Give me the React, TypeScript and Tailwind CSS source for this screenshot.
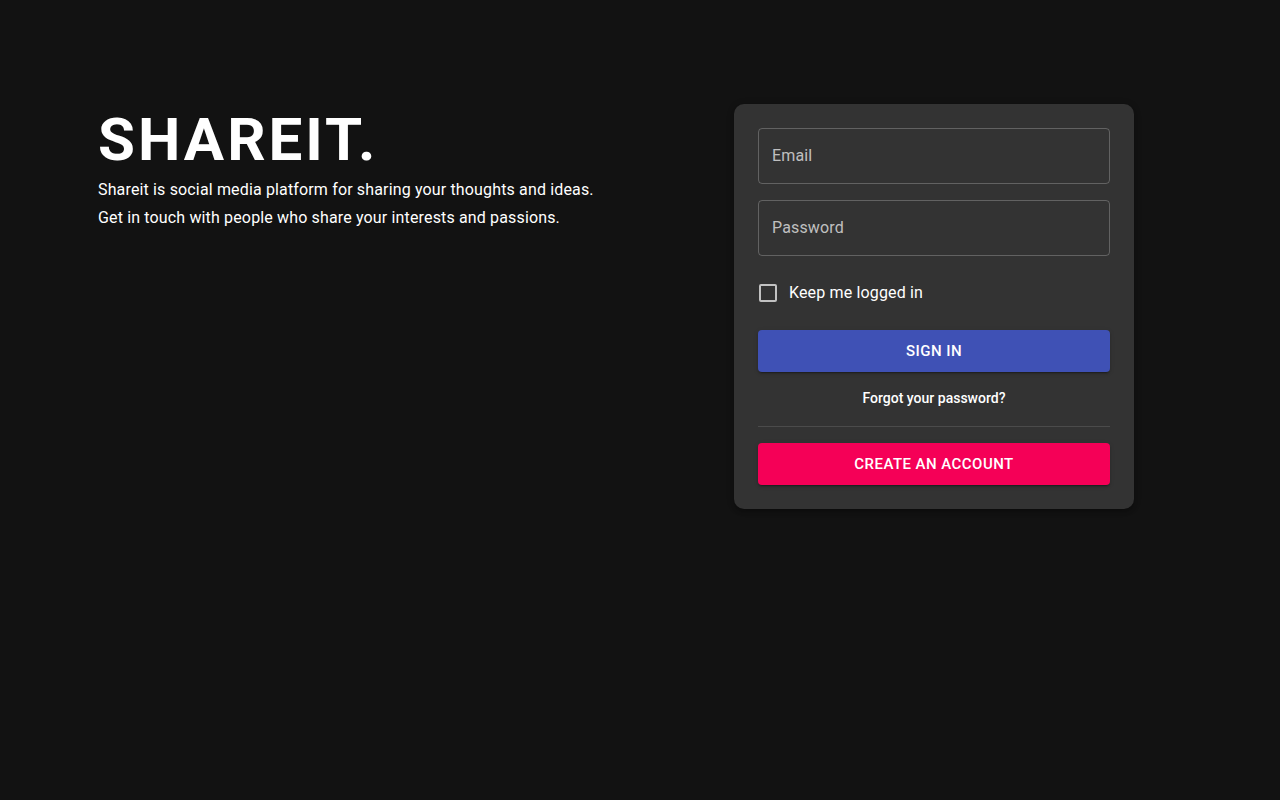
import React from "react";

export default function App() {
  return (
    <div className="min-h-[800px] w-full bg-[#121212] text-white" style={{ fontFamily: "Roboto, 'Noto Sans', sans-serif" }}>
      <div className="flex pt-[104px] pl-[98px]">
        <div className="w-[636px]">
          <h1 className="text-[60px] font-bold leading-[72px] tracking-[3px] text-white">SHAREIT.</h1>
          <p className="text-[16px] leading-[28px] tracking-[0.15px] text-white">Shareit is social media platform for sharing your thoughts and ideas.</p>
          <p className="text-[16px] leading-[28px] tracking-[0.15px] text-white">Get in touch with people who share your interests and passions.</p>
        </div>
        <div className="w-[400px] rounded-[10px] bg-[#333333] p-6 shadow-[0_3px_3px_-2px_rgba(0,0,0,0.2),0_3px_4px_0_rgba(0,0,0,0.14),0_1px_8px_0_rgba(0,0,0,0.12)]">
          <div className="h-[56px] rounded-[4px] border border-[rgba(255,255,255,0.23)] flex items-center px-[13px]">
            <span className="text-[16px] tracking-[0.15px] text-[rgba(255,255,255,0.7)]">Email</span>
          </div>
          <div className="h-[56px] mt-4 rounded-[4px] border border-[rgba(255,255,255,0.23)] flex items-center px-[13px]">
            <span className="text-[16px] tracking-[0.15px] text-[rgba(255,255,255,0.7)]">Password</span>
          </div>
          <div className="mt-[16px] h-[42px] flex items-center">
            <div className="ml-[1px] w-[18px] h-[18px] rounded-[2px] border-2 border-[rgba(255,255,255,0.7)]" />
            <span className="ml-[12px] text-[16px] tracking-[0.15px] text-white">Keep me logged in</span>
          </div>
          <button className="mt-[16px] w-full h-[42px] rounded-[4px] bg-[#3f51b5] text-[15px] font-medium tracking-[0.46px] uppercase text-white shadow-[0_3px_1px_-2px_rgba(0,0,0,0.2),0_2px_2px_0_rgba(0,0,0,0.14),0_1px_5px_0_rgba(0,0,0,0.12)]">
            Sign in
          </button>
          <div className="mt-[16px] text-center text-[14px] font-medium leading-[20px] text-white">Forgot your password?</div>
          <div className="mt-[18px] h-px bg-[rgba(255,255,255,0.12)]" />
          <button className="mt-[16px] w-full h-[42px] rounded-[4px] bg-[#f50057] text-[15px] font-medium tracking-[0.46px] uppercase text-white shadow-[0_3px_1px_-2px_rgba(0,0,0,0.2),0_2px_2px_0_rgba(0,0,0,0.14),0_1px_5px_0_rgba(0,0,0,0.12)]">
            Create an account
          </button>
        </div>
      </div>
    </div>
  );
}
